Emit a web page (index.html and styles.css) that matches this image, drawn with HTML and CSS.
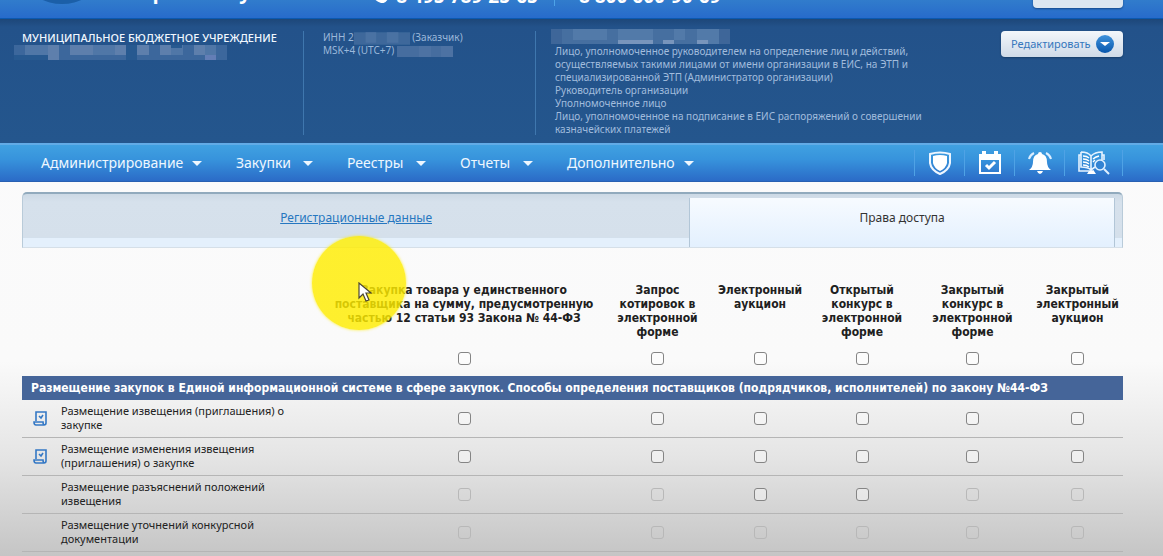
FILE: index.html
```html
<!DOCTYPE html>
<html lang="ru">
<head>
<meta charset="utf-8">
<title>Права доступа</title>
<link rel="stylesheet" href="styles.css">
</head>
<body>
<header class="top">
  <div class="logo"></div>
  <div class="site">портал закупок</div>
  <div class="phones">
    <svg class="handset" width="18" height="18" viewBox="0 0 18 18"><path d="M3 1 7 6 5 9q2 3 5 4l3-3 5 4q-3 5-7 4Q2 15 0 5 0 2 3 1Z" fill="#fff"/></svg>
    <span class="phone">8 495 789-25-65</span>
    <span class="phone second">8 800 600-90-69</span>
  </div>
  <button class="exit" type="button" aria-label="Выход"></button>
</header>
<section class="info">
  <div class="org">
    <div class="org-name">МУНИЦИПАЛЬНОЕ БЮДЖЕТНОЕ УЧРЕЖДЕНИЕ</div>
    <svg class="mask mask-org" width="213" height="15" viewBox="0 0 213 15"><path fill="#3f6a9e" d="M0 0h213v15H0z"/><path fill="#557bab" d="M11 0h34v10H11zM79 0h23v10H79zM146 0h23v10h-23zM180 0h22v10h-22z"/><path fill="#6584b0" d="M34 0h11v15H34zM56 0h23v10H56zM101 0h11v10h-11zM123 0h12v10h-12zM146 0h11v10h-11zM180 0h11v10h-11z"/><path fill="#285a91" d="M112 0h11v15h-11zM0 10h34v5H0zM157 0h11v3h-11z"/><path fill="#6b83bb" d="M191 10h11v5h-11z"/></svg>
  </div>
  <div class="ids">
    <div class="line">ИНН 2<svg class="mask" width="56" height="13" viewBox="0 0 58 13"><path fill="#416b9d" d="M0 0h58v13H0z"/><path fill="#4f76a6" d="M12 0h11v11H12zM34 0h12v11H34z"/></svg> (Заказчик)</div>
    <div class="line">MSK+4 (UTC+7) <svg class="mask" width="56" height="11" viewBox="0 0 56 11"><path fill="#4a70a2" d="M0 0h56v11H0z"/><path fill="#5276a6" d="M22 0h12v11H22zM44 0h12v11H44z"/></svg></div>
  </div>
  <div class="person">
    <svg class="mask mask-person" width="179" height="15" viewBox="0 0 179 15"><path fill="#4a73a3" d="M0 0h179v15H0z"/><path fill="#587fad" d="M22 0h34v11H22zM67 0h35v11H67zM123 0h11v11h-11zM146 0h22v15h-22z"/><path fill="#829dc2" d="M67 11h35v4H67zM112 11h11v4h-11zM146 11h11v4h-11z"/><path fill="#41699b" d="M0 0h11v15H0zM168 0h11v15h-11z"/></svg>
    <p>Лицо, уполномоченное руководителем на определение лиц и действий,<br>осуществляемых такими лицами от имени организации в ЕИС, на ЭТП и<br>специализированной ЭТП (Администратор организации)<br>Руководитель организации<br>Уполномоченное лицо<br>Лицо, уполномоченное на подписание в ЕИС распоряжений о совершении<br>казначейских платежей</p>
  </div>
  <button class="edit" type="button">Редактировать
    <svg width="20" height="20" viewBox="0 0 20 20"><defs><linearGradient id="ball" x2="0" y2="1"><stop stop-color="#3f93dc"/><stop offset="1" stop-color="#0756ac"/></linearGradient></defs><circle cx="10" cy="10" r="9" fill="url(#ball)"/><path d="M5 8h10l-5 4z" fill="#fff"/></svg>
  </button>
</section>
<nav class="nav">
  <ul class="menu">
    <li><a href="#">Администрирование</a></li>
    <li><a href="#">Закупки</a></li>
    <li><a href="#">Реестры</a></li>
    <li><a href="#">Отчеты</a></li>
    <li><a href="#">Дополнительно</a></li>
  </ul>
  <div class="tools">
    <a href="#" aria-label="Безопасность"><svg width="24" height="24" viewBox="0 0 24 24"><path d="M2 3q10-3 20 0v9q-1 7-10 11Q3 19 2 12Z" fill="none" stroke="#eef6ff" stroke-width="2"/><path d="M5 5q7-2 14 0v7q-1 5-7 8-6-3-7-8Z" fill="#fff"/></svg></a>
    <a href="#" aria-label="Календарь"><svg width="24" height="24" viewBox="0 0 24 24"><path d="M2 4v18h20V4Z" fill="none" stroke="#fff" stroke-width="2"/><path d="M1 3h22v6H1zM4 0h4v5H4zM16 0h4v5h-4z" fill="#fff"/><path d="m8 14 3 3 6-6" fill="none" stroke="#fff" stroke-width="3"/></svg></a>
    <a href="#" aria-label="Уведомления"><svg width="24" height="24" viewBox="0 0 24 24"><path d="M10 3a2 2 0 0 1 4 0q5 1 5 8 0 5 4 8H1q4-3 4-8 0-7 5-8ZM9 20h6q-1 3-3 3t-3-3Z" fill="#fff"/><path d="M1 8q1-4 5-6M23 8q-1-4-5-6" fill="none" stroke="#dceeff" stroke-width="2"/></svg></a>
    <a href="#" aria-label="Реестр"><svg width="32" height="24" viewBox="0 0 32 24"><path d="M3 4H1v16h15M24 4h2v5M3 1q7 0 10 4 4-4 11-4v8M3 1v15q7 0 10 3l4-3M13 5v14" fill="none" stroke="#e6f3ff" stroke-width="1.6"/><path d="M11 20h5l2 3H9z" fill="#fff"/><path d="M5 5q4 0 6 2M5 8q4 0 6 2M5 11q4 0 6 2M5 14q4 0 6 2M15 8q2-2 6-3M15 11l2-2" fill="none" stroke="#fff" stroke-width="1.3"/><circle cx="22" cy="14" r="5" fill="#3383d3" stroke="#e0f0ff" stroke-width="1.6"/><path d="m26 18 5 5" stroke="#e0f0ff" stroke-width="2"/></svg></a>
  </div>
</nav>
<main class="main">
  <div class="tabs">
    <div class="tab"><a href="#">Регистрационные данные</a></div>
    <div class="tab active">Права доступа</div>
  </div>
  <table class="rights">
    <colgroup><col class="c-icon"><col class="c-name"><col class="c-1"><col class="c-2"><col class="c-3"><col class="c-4"><col class="c-5"><col class="c-6"></colgroup>
    <thead>
      <tr class="titles">
        <td colspan="2"></td>
        <th><div class="single">Закупка товара у единственного<br>поставщика на сумму, предусмотренную<br>частью 12 статьи 93 Закона № 44-ФЗ
          <div class="pointer"><svg width="14" height="20" viewBox="0 0 14 20"><path d="M1 1v15l4-4 3 7 3-1-3-7h5Z" fill="#fff" stroke="#4b4634" stroke-width="1.2"/></svg></div></div></th>
        <th>Запрос<br>котировок в<br>электронной<br>форме</th>
        <th>Электронный<br>аукцион</th>
        <th>Открытый<br>конкурс в<br>электронной<br>форме</th>
        <th>Закрытый<br>конкурс в<br>электронной<br>форме</th>
        <th>Закрытый<br>электронный<br>аукцион</th>
      </tr>
      <tr class="all">
        <td colspan="2"></td>
        <td><input type="checkbox" aria-label="Все: единственный поставщик"></td>
        <td><input type="checkbox" aria-label="Все: запрос котировок"></td>
        <td><input type="checkbox" aria-label="Все: электронный аукцион"></td>
        <td><input type="checkbox" aria-label="Все: открытый конкурс"></td>
        <td><input type="checkbox" aria-label="Все: закрытый конкурс"></td>
        <td><input type="checkbox" aria-label="Все: закрытый аукцион"></td>
      </tr>
    </thead>
    <tbody>
      <tr class="group"><th colspan="8">Размещение закупок в Единой информационной системе в сфере закупок. Способы определения поставщиков (подрядчиков, исполнителей) по закону №44-ФЗ</th></tr>
      <tr class="row">
        <td class="mark"><svg width="14" height="15" viewBox="0 0 14 15"><path d="M3 10V1h10v11q0 2-2 2H3q-2 0-2-3h9q0 3 2 3" fill="none" stroke="#3478c5" stroke-width="1.6"/><path d="m6 5 2 2 2-3" fill="none" stroke="#3478c5" stroke-width="1.6"/></svg></td>
        <td class="name" id="r1">Размещение извещения (приглашения) о<br>закупке</td>
        <td><input type="checkbox" aria-labelledby="r1"></td><td><input type="checkbox" aria-labelledby="r1"></td><td><input type="checkbox" aria-labelledby="r1"></td><td><input type="checkbox" aria-labelledby="r1"></td><td><input type="checkbox" aria-labelledby="r1"></td><td><input type="checkbox" aria-labelledby="r1"></td>
      </tr>
      <tr class="row">
        <td class="mark"><svg width="14" height="15" viewBox="0 0 14 15"><path d="M3 10V1h10v11q0 2-2 2H3q-2 0-2-3h9q0 3 2 3" fill="none" stroke="#3478c5" stroke-width="1.6"/><path d="m6 5 2 2 2-3" fill="none" stroke="#3478c5" stroke-width="1.6"/></svg></td>
        <td class="name" id="r2">Размещение изменения извещения<br>(приглашения) о закупке</td>
        <td><input type="checkbox" aria-labelledby="r2"></td><td><input type="checkbox" aria-labelledby="r2"></td><td><input type="checkbox" aria-labelledby="r2"></td><td><input type="checkbox" aria-labelledby="r2"></td><td><input type="checkbox" aria-labelledby="r2"></td><td><input type="checkbox" aria-labelledby="r2"></td>
      </tr>
      <tr class="row">
        <td></td>
        <td class="name" id="r3">Размещение разъяснений положений<br>извещения</td>
        <td><input type="checkbox" aria-labelledby="r3" disabled></td><td><input type="checkbox" aria-labelledby="r3" disabled></td><td><input type="checkbox" aria-labelledby="r3"></td><td><input type="checkbox" aria-labelledby="r3"></td><td><input type="checkbox" aria-labelledby="r3" disabled></td><td><input type="checkbox" aria-labelledby="r3" disabled></td>
      </tr>
      <tr class="row">
        <td></td>
        <td class="name" id="r4">Размещение уточнений конкурсной<br>документации</td>
        <td><input type="checkbox" aria-labelledby="r4" disabled></td><td><input type="checkbox" aria-labelledby="r4" disabled></td><td><input type="checkbox" aria-labelledby="r4" disabled></td><td><input type="checkbox" aria-labelledby="r4" disabled></td><td><input type="checkbox" aria-labelledby="r4" disabled></td><td><input type="checkbox" aria-labelledby="r4" disabled></td>
      </tr>
    </tbody>
  </table>
</main>
</body>
</html>
```
FILE: styles.css
```css
* { box-sizing: border-box; }
html { min-height: 100%; background: #fafafa; }
body {
  margin: 0;
  min-height: 100vh;
  font: 12px/14px Tahoma, "Noto Sans", sans-serif;
  color: #333;
  background: linear-gradient(#fbfbfc 0, #fafafa 65%, #e5e5e5 82%, #c5c5c5 100%);
}
button { font: inherit; }
.top {
  display: flex;
  align-items: flex-end;
  height: 19px;
  padding: 0 40px 0 30px;
  overflow: hidden;
  background: linear-gradient(#317ccc, #276bcb);
  border-bottom: 1px solid #0b59b0;
  color: #fff;
}
.logo { width: 64px; height: 40px; margin-bottom: 14px; border-radius: 50%; background: #1b5fa8; }
.site { margin: 0 0 16px 33px; font: bold 20px/20px "Noto Sans", sans-serif; white-space: nowrap; }
.phones { display: flex; align-items: flex-end; margin: 0 auto 12px 82px; font: bold 19px/20px "Noto Sans", sans-serif; white-space: nowrap; }
.handset { margin: 0 8px 3px 0; }
.second { margin-left: 16px; padding-left: 24px; border-left: 1px solid #4da3e8; }
.exit { width: 90px; height: 27px; margin-bottom: 10px; border: 0; border-radius: 4px; background: #dde7f1; box-shadow: 0 1px 2px #174a8b; flex: none; }

.info {
  display: flex;
  align-items: flex-start;
  height: 124px;
  padding: 12px 40px 8px 22px;
  background: linear-gradient(#1d4779 0, #23528a 8px, #24568d 100%);
}
.org, .ids { align-self: stretch; border-right: 1px solid #3f77ae; }
.org { width: 282px; }
.org-name { font-size: 11px; font-weight: 500; line-height: 14px; color: #f0f7ff; white-space: nowrap; }
.mask { display: inline-block; vertical-align: middle; opacity: .9; }
.mask-org { display: block; margin-left: -8px; }
.ids { width: 232px; padding-left: 19px; font-size: 10px; color: #9bb8da; }
.line { line-height: 13px; height: 13px; white-space: nowrap; }
.person { padding-left: 19px; flex: 1; font-size: 10px; color: #a1bcdd; }
.mask-person { display: block; margin: -2px 0 1px -4px; }
.person p { margin: 0; line-height: 13px; white-space: nowrap; }
.edit {
  display: flex;
  align-items: center;
  justify-content: space-between;
  width: 122px;
  height: 26px;
  padding: 0 8px 0 10px;
  border: 0;
  border-radius: 4px;
  background: linear-gradient(#f3f7fb, #cfdae7);
  box-shadow: 0 1px 2px #173c68;
  color: #3577bd;
  font-size: 11px;
}

.nav {
  display: flex;
  justify-content: space-between;
  align-items: center;
  height: 39px;
  padding: 0 40px 0 41px;
  border-top: 2px solid #62abe6;
  border-bottom: 1px solid #2960b2;
  background: linear-gradient(#40a1e1, #3793dc 40%, #2b6bc7);
}
.menu {
  display: grid;
  grid-template-columns: 195px 111px 113px 107px 161px;
  margin: 0;
  padding: 0;
  list-style: none;
}
.menu a {
  display: flex;
  align-items: center;
  justify-content: space-between;
  padding-right: 34px;
  color: #eef7ff;
  font-size: 14px;
  line-height: 20px;
  text-decoration: none;
}
.menu a::after { content: ""; border: 5px solid transparent; border-top-color: #eef7ff; border-bottom: 0; }
.tools { display: flex; border-right: 1px solid #4fa2e5; }
.tools a { display: grid; place-items: center; width: 50px; height: 26px; border-left: 1px solid #4fa2e5; }
.tools a:last-child { width: 58px; }

.main { padding: 10px 40px 0 22px; }
.tabs {
  display: flex;
  height: 56px;
  padding: 4px 7px 0 0;
  border-top: 2px solid #91aabd;
  border-left: 1px solid #b9cbd9;
  border-right: 1px solid #b9cbd9;
  border-bottom: 1px solid #d5dfe8;
  border-radius: 5px 5px 0 0;
  background: linear-gradient(#ccd9e5 0, #d6e1ec 8px, #d5e0eb 43px, #c3d0dc 43px, #e4f0fc 44px);
}
.tab { flex: 668; padding-bottom: 10px; display: grid; place-items: center; font-size: 12px; }
.tab a { color: #2677c0; }
.active { flex: 425; border-left: 1px solid #b2c6d7; border-right: 1px solid #b2c6d7; background: linear-gradient(#f7fbff, #e3f0fe); }

.rights { width: 100%; table-layout: fixed; border-collapse: separate; border-spacing: 0; }
.rights td, .rights th { padding: 0; text-align: center; }
.c-icon { width: 39px; } .c-name { width: 261px; } .c-1 { width: 284px; }
.c-2 { width: 103px; } .c-3, .c-4 { width: 102px; } .c-5 { width: 119px; } .c-6 { width: 91px; }
.rights .titles th { padding-top: 35px; vertical-align: top; font: bold 12px/14px "DejaVu Sans Condensed", Tahoma, sans-serif; color: #202020; white-space: nowrap; }
.single { position: relative; }
.pointer {
  position: absolute;
  left: -10px;
  top: -47px;
  width: 94px;
  height: 94px;
  padding: 46px 0 0 46px;
  border-radius: 50%;
  background: rgba(255, 237, 0, .82);
  box-shadow: 0 0 3px rgba(255, 237, 0, .8);
  text-align: left;
}
.all td { height: 37px; padding-top: 2px; vertical-align: middle; }
.rights .group th { height: 24px; padding-left: 9px; background: #456599; color: #fff; text-align: left; font: bold 12px/14px "DejaVu Sans Condensed", Tahoma, sans-serif; white-space: nowrap; }
.rights .row td { height: 38px; border-bottom: 1px solid #b5b5b5; }
.rights .row .name { padding-bottom: 1px; text-align: left; font-size: 11px; color: #222; white-space: nowrap; }
.rights .row .mark { padding-right: 4px; }
.mark svg, .pointer svg { display: block; }
.mark svg { margin: 0 auto; }
input[type="checkbox"] {
  appearance: none;
  display: block;
  width: 13px;
  height: 13px;
  margin: 0 auto;
  border: 1px solid #858585;
  border-radius: 3px;
  background: rgba(255, 255, 255, .4);
}
input[type="checkbox"]:disabled { border-color: #b8b8b8; background: transparent; }
```
